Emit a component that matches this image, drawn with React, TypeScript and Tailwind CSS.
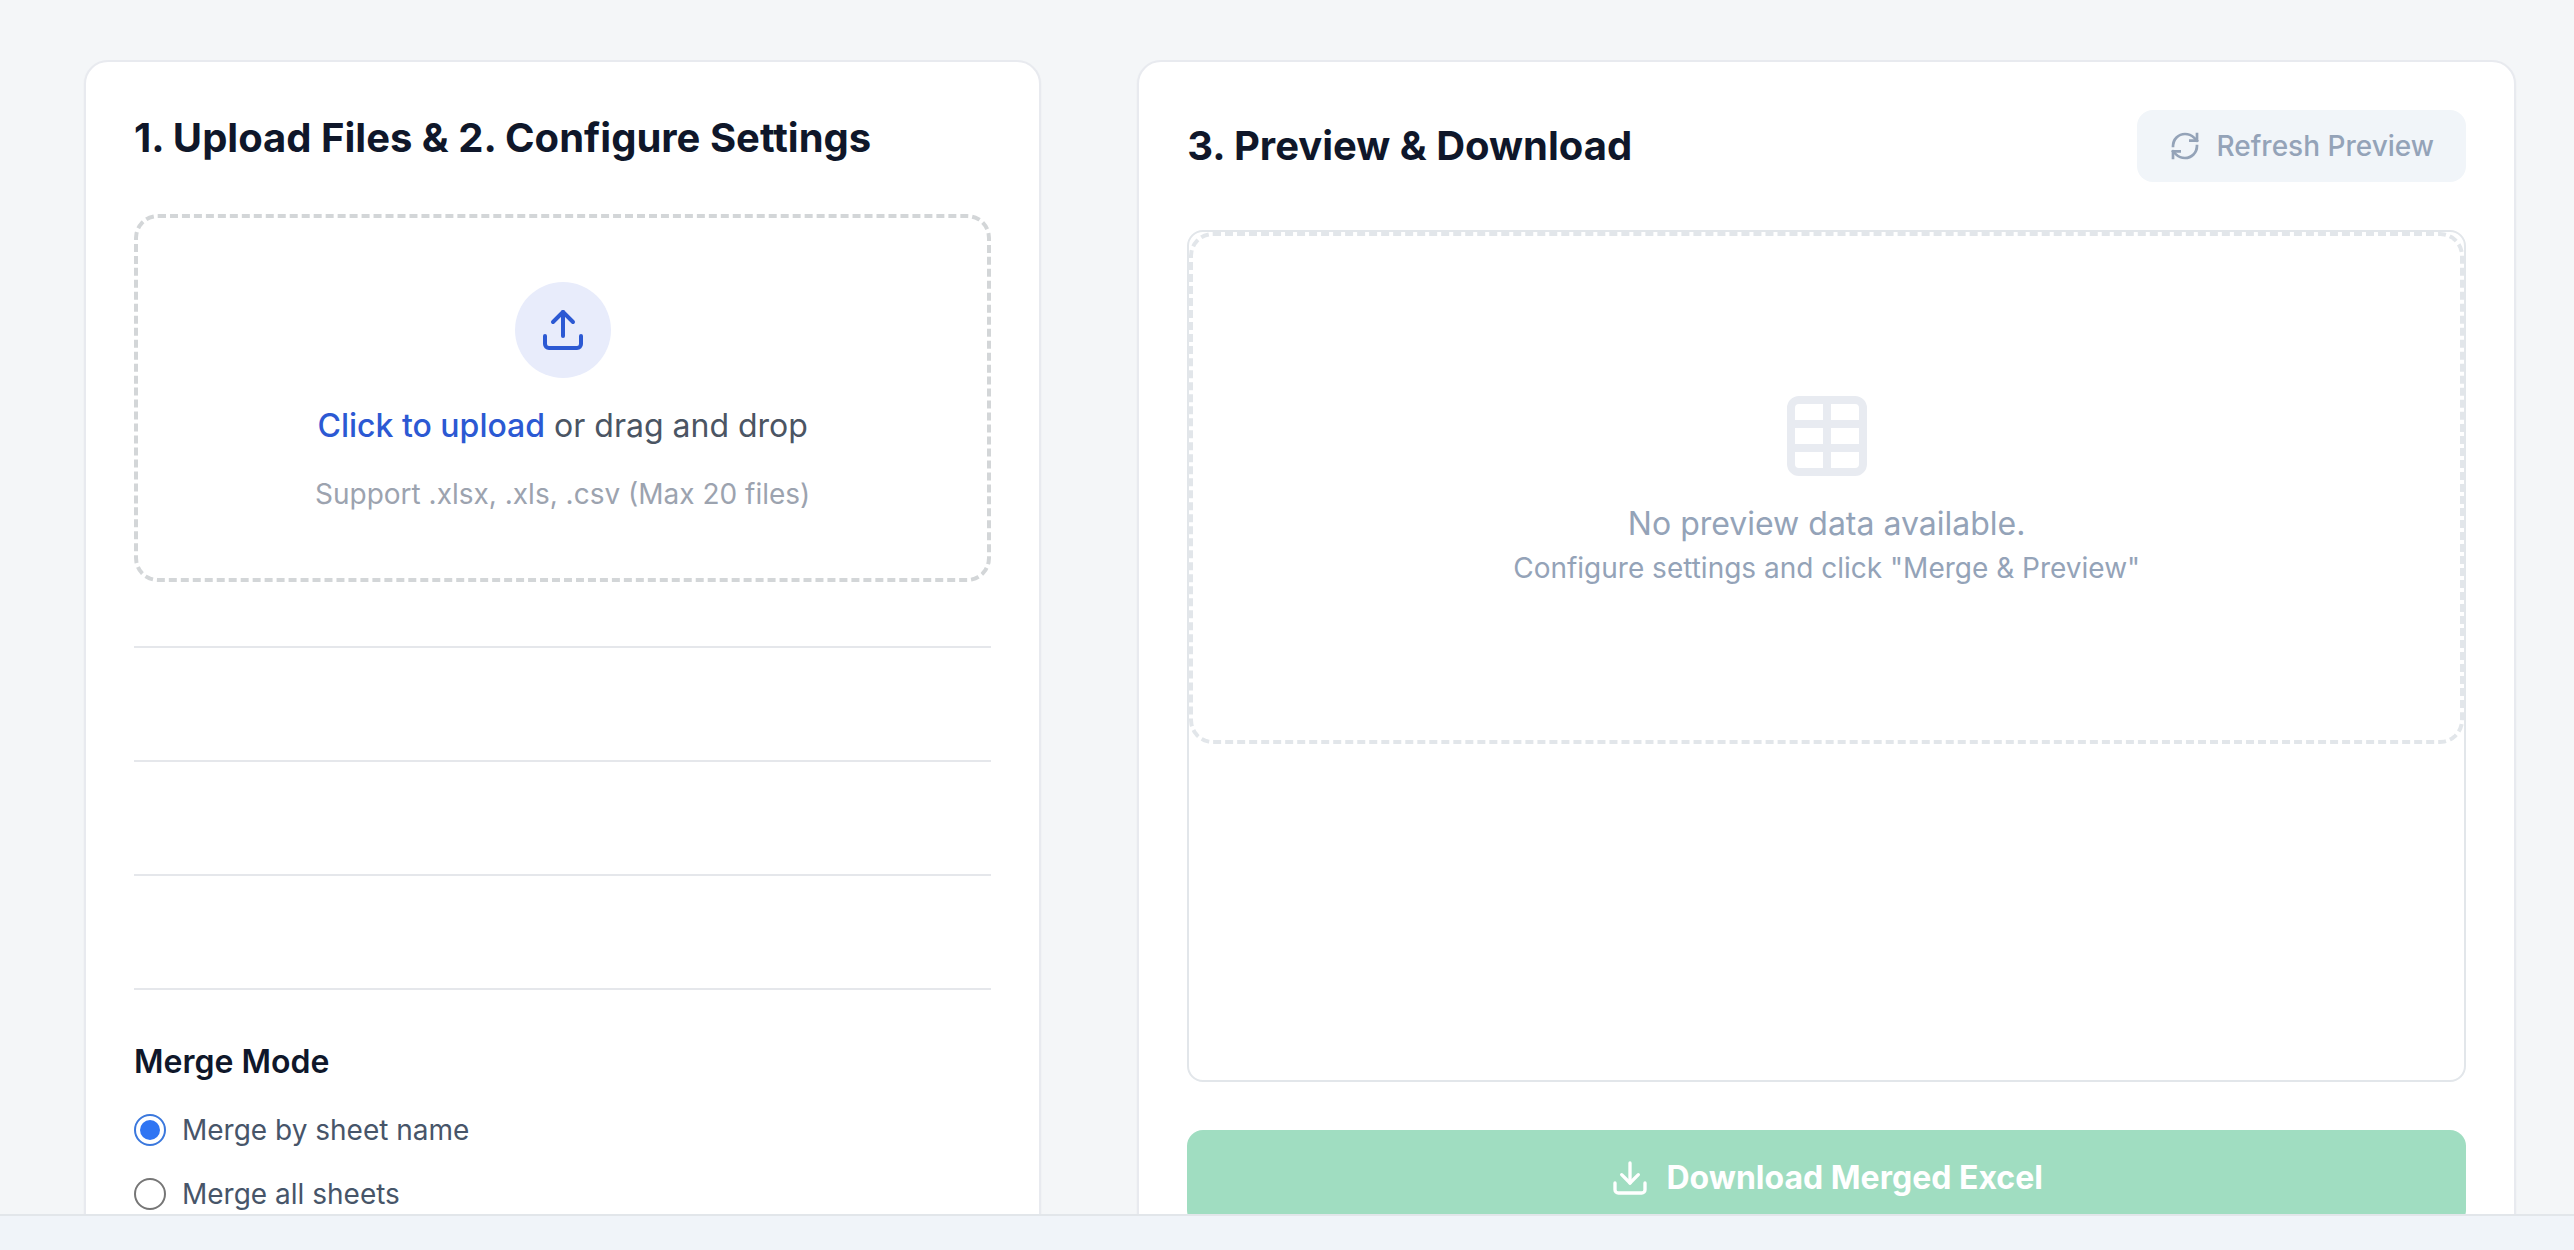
import { useState } from "react"
import { Download, RefreshCw, Table, Upload } from "lucide-react"

const mergeModes = [
  { id: "by-name", label: "Merge by sheet name" },
  { id: "all", label: "Merge all sheets" },
]

function UploadBox() {
  return (
    <label
      htmlFor="files"
      className="flex flex-col items-center rounded-3xl border-4 border-dashed border-[#d3d6d8] px-8 py-16 cursor-pointer"
    >
      <span className="flex size-24 items-center justify-center rounded-full bg-[#e8ecfb] mb-6">
        <Upload className="size-12 text-[#2c59d3]" />
      </span>
      <span className="text-[32px] leading-[48px] text-[#4b5563] mb-6">
        <span className="font-medium text-[#2c59d3]">Click to upload</span> or drag and drop
      </span>
      <span className="text-[28px] leading-[40px] text-[#9ca3af]">Support .xlsx, .xls, .csv (Max 20 files)</span>
      <input id="files" type="file" multiple accept=".xlsx,.xls,.csv" className="hidden" />
    </label>
  )
}

function MergeMode() {
  const [mode, setMode] = useState("by-name")

  return (
    <fieldset>
      <legend className="text-[32px] leading-[48px] font-semibold text-[#0f172a] mb-6">Merge Mode</legend>
      <div className="flex flex-col gap-6">
        {mergeModes.map((m) => (
          <div key={m.id} className="flex items-center gap-4">
            <input
              id={m.id}
              type="radio"
              name="merge-mode"
              checked={mode === m.id}
              onChange={() => setMode(m.id)}
              className="size-8 appearance-none rounded-full border-2 border-[#767676] bg-clip-content p-1 checked:border-[#3b78dd] checked:bg-[#3075f3]"
            />
            <label htmlFor={m.id} className="text-[28px] leading-[40px] text-[#475569]">
              {m.label}
            </label>
          </div>
        ))}
      </div>
    </fieldset>
  )
}

function EmptyPreview() {
  return (
    <div className="flex h-[512px] flex-col items-center justify-center rounded-3xl border-4 border-dashed border-[#e2e6ea] text-[#94a3b8]">
      <Table className="size-24 text-[#e8ebf1] mb-4" />
      <p className="text-[32px] leading-[48px]">No preview data available.</p>
      <p className="text-[28px] leading-[40px]">Configure settings and click "Merge &amp; Preview"</p>
    </div>
  )
}

export default function App() {
  return (
    <div className="flex h-screen flex-col overflow-hidden bg-[#f4f6f8] font-['Inter',sans-serif]">
      <main className="grid min-h-0 flex-1 grid-cols-12 gap-24 overflow-hidden pt-[60px] pl-[84px] pr-[58px]">
        <section className="col-span-5 h-fit rounded-3xl border-2 border-[#e8eaef] bg-white p-12 shadow-xs">
          <h2 className="text-[40px] leading-[56px] font-bold text-[#0f172a] mb-12">
            1. Upload Files &amp; 2. Configure Settings
          </h2>
          <UploadBox />
          <div className="mt-16 border-t-2 border-[#e5e7eb] pt-12"></div>
          <div className="mt-16 border-t-2 border-[#e5e7eb] pt-12"></div>
          <div className="mt-16 border-t-2 border-[#e5e7eb] pt-12"></div>
          <div className="mt-16 border-t-2 border-[#e5e7eb] pt-12">
            <MergeMode />
          </div>
        </section>

        <section className="col-span-7 h-fit rounded-3xl border-2 border-[#e8eaef] bg-white p-12 shadow-xs">
          <div className="flex items-center justify-between mb-12">
            <h2 className="text-[40px] leading-[56px] font-bold text-[#0f172a]">3. Preview &amp; Download</h2>
            <button
              type="button"
              disabled
              className="flex items-center gap-4 rounded-2xl bg-[#f1f5f9] px-8 py-4 text-[28px] leading-[40px] font-medium text-[#94a3b8]"
            >
              <RefreshCw className="size-8" strokeLinecap="square" strokeLinejoin="miter" />
              Refresh Preview
            </button>
          </div>
          <div className="h-[852px] rounded-2xl border-2 border-[#e2e6ea] mb-12">
            <EmptyPreview />
          </div>
          <button
            type="button"
            disabled
            className="flex w-full items-center justify-center gap-4 rounded-2xl bg-[#a0ddc1] py-6 text-[32px] leading-[48px] font-bold text-white"
          >
            <Download className="size-10" />
            Download Merged Excel
          </button>
        </section>
      </main>
      <footer className="h-9 shrink-0 border-t-2 border-[#e2e6ea] bg-[#f0f4f9]"></footer>
    </div>
  )
}
